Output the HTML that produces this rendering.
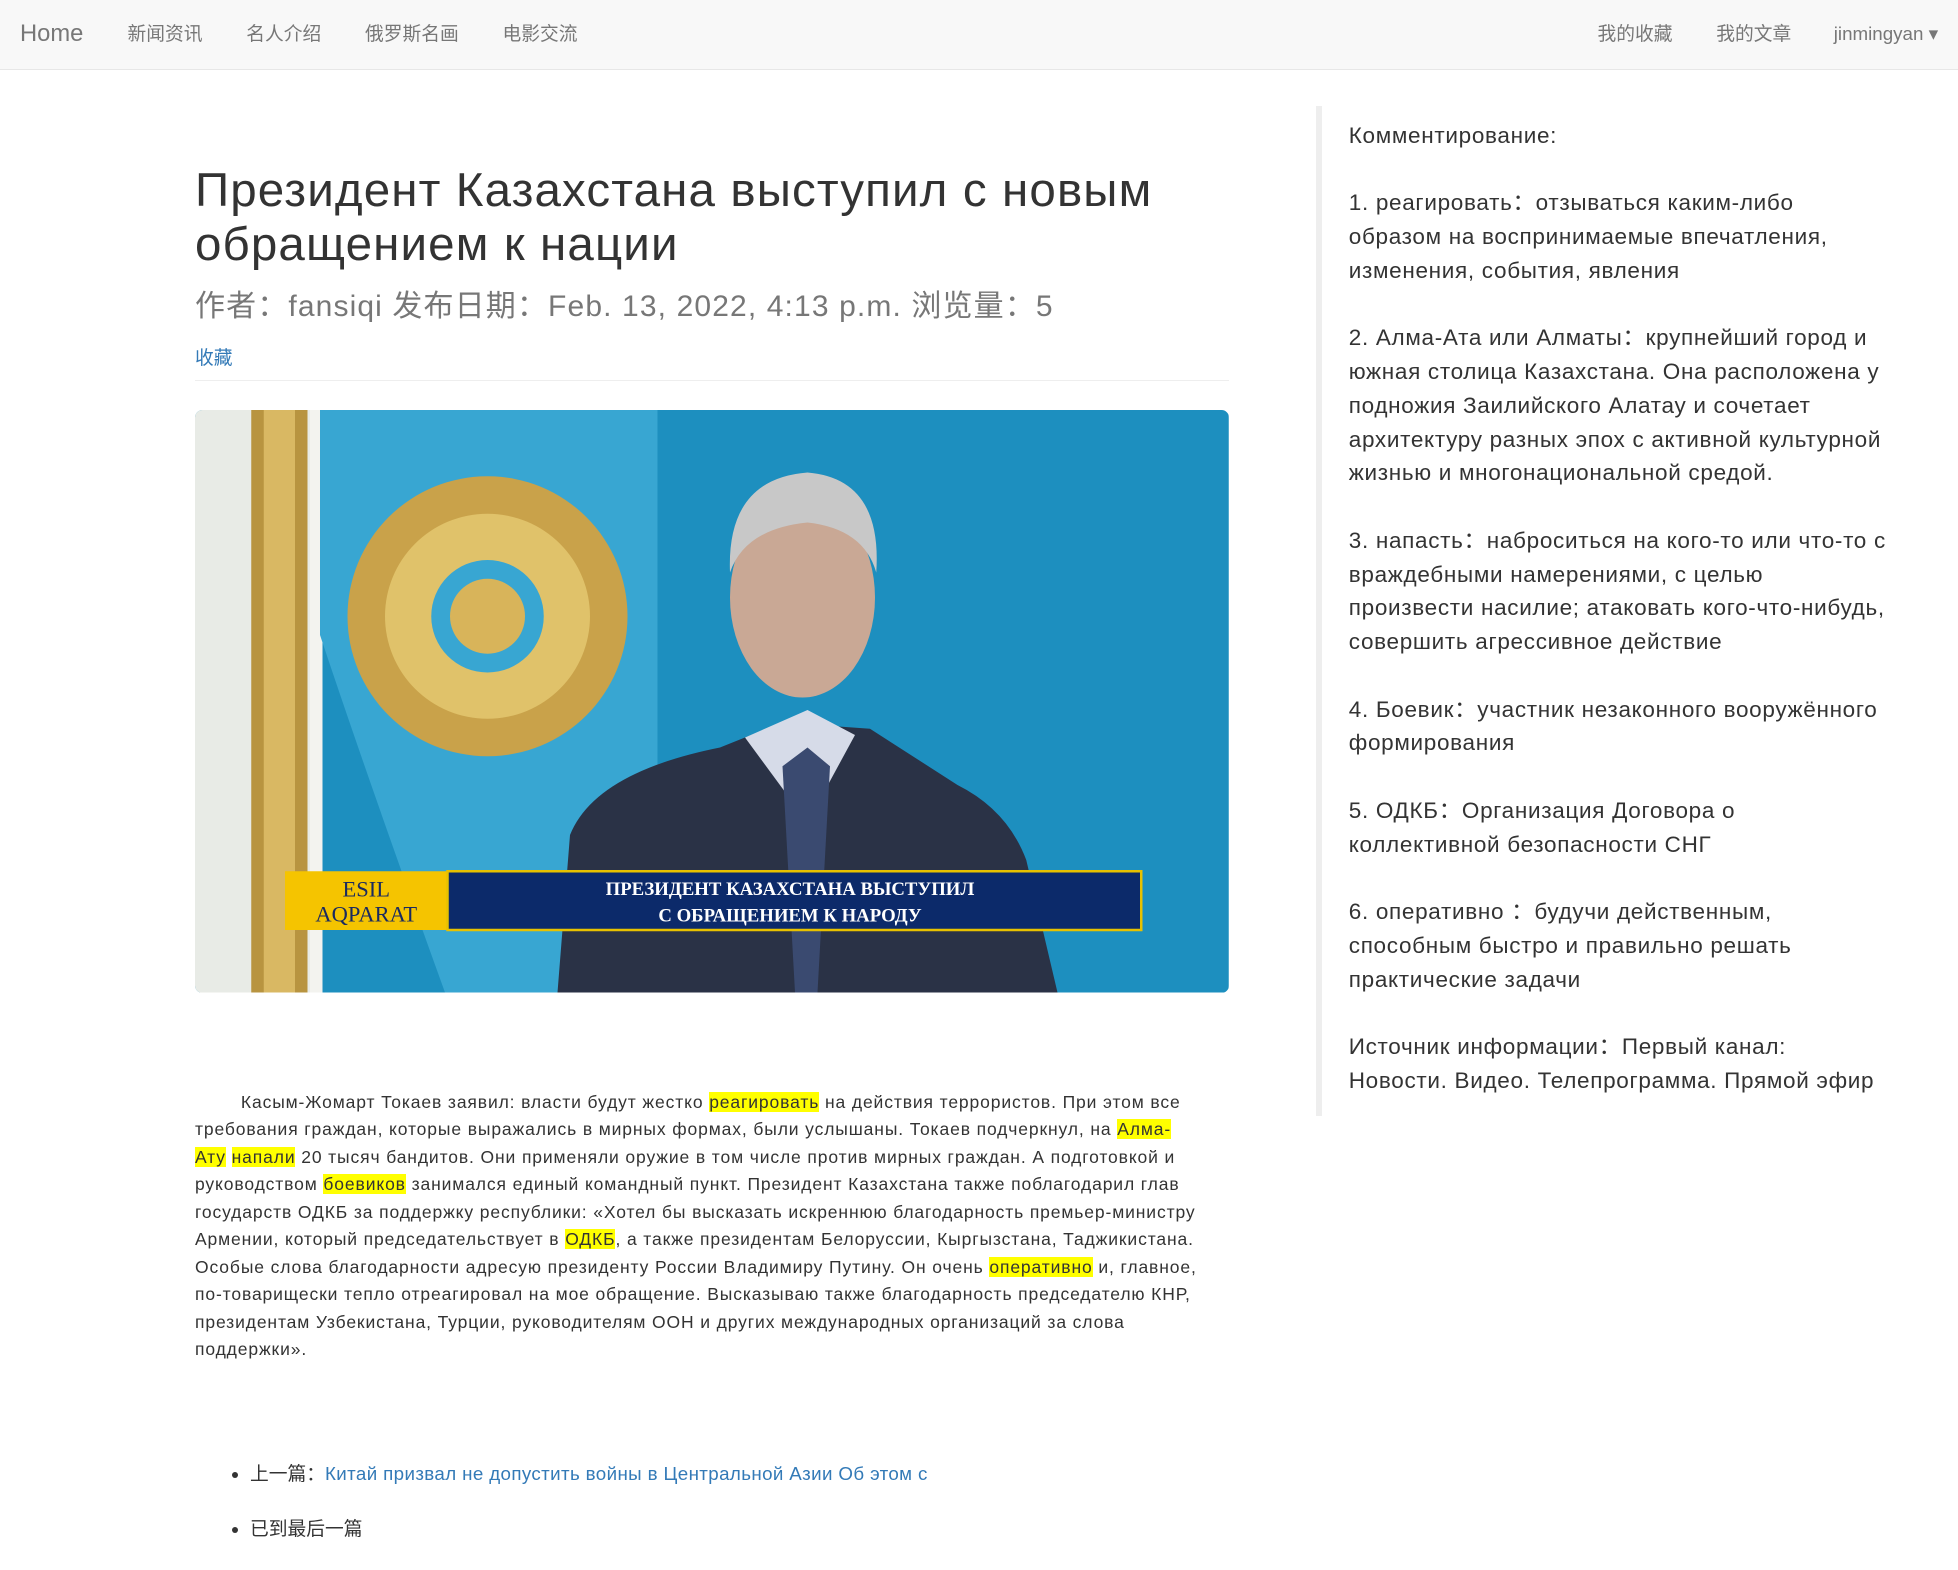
<!DOCTYPE html>
<html><head><meta charset="utf-8">
<style>
html,body{margin:0;padding:0;background:#fff;}
body{zoom:1.25;width:1566px;height:1245px;overflow:hidden;position:relative;font-family:"Liberation Sans","Noto Sans CJK SC",sans-serif;color:#333;}
.nav{position:absolute;left:0;top:0;width:1566px;height:55px;background:#f8f8f8;border-bottom:1px solid #e7e7e7;}
.nav span{position:absolute;top:0;line-height:55px;font-size:15px;color:#777;}
.home{font-size:19px!important;color:#777;}
h1{position:absolute;left:156px;top:131px;margin:0;font-size:38px;letter-spacing:0.9px;font-weight:400;line-height:43px;color:#333;}
.meta{position:absolute;left:156px;top:229px;font-size:24px;letter-spacing:0.9px;color:#777;line-height:34px;}
.fav{position:absolute;left:156px;top:274px;font-size:15px;color:#337ab7;}
.hr{position:absolute;left:156px;top:304px;width:827px;border-top:1px solid #eee;}
.pic{position:absolute;left:156px;top:328px;width:827px;height:466px;border-radius:6px;overflow:hidden;}
.para{position:absolute;left:156px;top:871px;font-size:14px;letter-spacing:0.7px;line-height:22px;color:#333;white-space:nowrap;}
.hl{background:#ffff00;}
ul{position:absolute;left:156px;top:1168px;margin:0;padding-left:44px;font-size:15px;color:#333;}
ul li{line-height:22px;margin-bottom:22px;}
ul a{color:#337ab7;text-decoration:none;letter-spacing:0.3px;}
.side{position:absolute;left:1053px;top:85px;height:808px;border-left:5px solid #eee;}
.st{position:absolute;left:1079px;top:95px;font-size:18px;letter-spacing:0.55px;line-height:27px;color:#333;white-space:nowrap;}
.st p{margin:0 0 27px 0;}
</style></head><body>
<div class="nav">
<span class="home" style="left:16px">Home</span>
<span style="left:102px">新闻资讯</span>
<span style="left:197px">名人介绍</span>
<span style="left:292px">俄罗斯名画</span>
<span style="left:402px">电影交流</span>
<span style="left:1278px">我的收藏</span>
<span style="left:1373px">我的文章</span>
<span style="left:1467px">jinmingyan ▾</span>
</div>
<h1>Президент Казахстана выступил с новым<br>обращением к нации</h1>
<div class="meta">作者：fansiqi 发布日期：Feb. 13, 2022, 4:13 p.m. 浏览量：5</div>
<div class="fav">收藏</div>
<div class="hr"></div>
<div class="pic">
<svg width="827" height="466" viewBox="0 0 827 466">
<rect width="827" height="466" fill="#1d8fbf"/>
<rect x="0" y="0" width="100" height="466" fill="#e8ebe6"/>
<rect x="45" y="0" width="45" height="466" fill="#b89440"/>
<rect x="55" y="0" width="25" height="466" fill="#d9b863"/>
<rect x="92" y="0" width="10" height="466" fill="#f3f3ef"/>
<path d="M100 0 H370 V466 H200 Q140 300 100 180 Z" fill="#38a6d2"/>
<circle cx="234" cy="165" r="112" fill="#c9a24a"/>
<circle cx="234" cy="165" r="82" fill="#e0c26a"/>
<circle cx="234" cy="165" r="45" fill="#38a6d2"/>
<circle cx="234" cy="165" r="30" fill="#d8b45a"/>
<ellipse cx="486" cy="150" rx="58" ry="80" fill="#c9a895"/>
<path d="M428 130 Q425 55 490 50 Q550 55 545 130 Q535 95 490 90 Q440 95 428 130Z" fill="#c8c8c8"/>
<path d="M290 466 L300 340 Q320 290 420 270 L470 250 L540 255 L610 300 Q650 320 665 360 L690 466Z" fill="#2a3246"/>
<path d="M440 262 L490 330 L528 260 L490 240Z" fill="#d6dbe8"/>
<path d="M470 285 L490 270 L508 285 L498 466 L480 466Z" fill="#3a4a70"/>
<rect x="72" y="369" width="130" height="47" fill="#f5c400"/>
<rect x="202" y="369" width="555" height="47" fill="#0c2a6a" stroke="#e7c100" stroke-width="2"/>
<text x="137" y="389" font-family="Liberation Serif,serif" font-size="18" fill="#1a2a60" text-anchor="middle">ESIL</text>
<text x="137" y="409" font-family="Liberation Serif,serif" font-size="18" fill="#1a2a60" text-anchor="middle">AQPARAT</text>
<text x="476" y="388" font-family="Liberation Serif,serif" font-size="15" font-weight="bold" fill="#fff" text-anchor="middle">ПРЕЗИДЕНТ КАЗАХСТАНА ВЫСТУПИЛ</text>
<text x="476" y="409" font-family="Liberation Serif,serif" font-size="15" font-weight="bold" fill="#fff" text-anchor="middle">С ОБРАЩЕНИЕМ К НАРОДУ</text>
</svg>
</div>
<div class="para">&nbsp;&nbsp;&nbsp;&nbsp;&nbsp;&nbsp;&nbsp;&nbsp;Касым-Жомарт Токаев заявил: власти будут жестко <span class="hl">реагировать</span> на действия террористов. При этом все<br>
требования граждан, которые выражались в мирных формах, были услышаны. Токаев подчеркнул, на <span class="hl">Алма-</span><br>
<span class="hl">Ату</span> <span class="hl">напали</span> 20 тысяч бандитов. Они применяли оружие в том числе против мирных граждан. А подготовкой и<br>
руководством <span class="hl">боевиков</span> занимался единый командный пункт. Президент Казахстана также поблагодарил глав<br>
государств ОДКБ за поддержку республики: «Хотел бы высказать искреннюю благодарность премьер-министру<br>
Армении, который председательствует в <span class="hl">ОДКБ</span>, а также президентам Белоруссии, Кыргызстана, Таджикистана.<br>
Особые слова благодарности адресую президенту России Владимиру Путину. Он очень <span class="hl">оперативно</span> и, главное,<br>
по-товарищески тепло отреагировал на мое обращение. Высказываю также благодарность председателю КНР,<br>
президентам Узбекистана, Турции, руководителям ООН и других международных организаций за слова<br>
поддержки».</div>
<ul><li>上一篇：<a>Китай призвал не допустить войны в Центральной Азии Об этом с</a></li><li>已到最后一篇</li></ul>
<div class="side"></div>
<div class="st">
<p>Комментирование:</p>
<p>1. реагировать：отзываться каким-либо<br>образом на воспринимаемые впечатления,<br>изменения, события, явления</p>
<p>2. Алма-Ата или Алматы：крупнейший город и<br>южная столица Казахстана. Она расположена у<br>подножия Заилийского Алатау и сочетает<br>архитектуру разных эпох с активной культурной<br>жизнью и многонациональной средой.</p>
<p>3. напасть：наброситься на кого-то или что-то с<br>враждебными намерениями, с целью<br>произвести насилие; атаковать кого-что-нибудь,<br>совершить агрессивное действие</p>
<p>4. Боевик：участник незаконного вооружённого<br>формирования</p>
<p>5. ОДКБ：Организация Договора о<br>коллективной безопасности СНГ</p>
<p>6. оперативно ：будучи действенным,<br>способным быстро и правильно решать<br>практические задачи</p>
<p>Источник информации：Первый канал:<br>Новости. Видео. Телепрограмма. Прямой эфир</p>
</div>
</body></html>
